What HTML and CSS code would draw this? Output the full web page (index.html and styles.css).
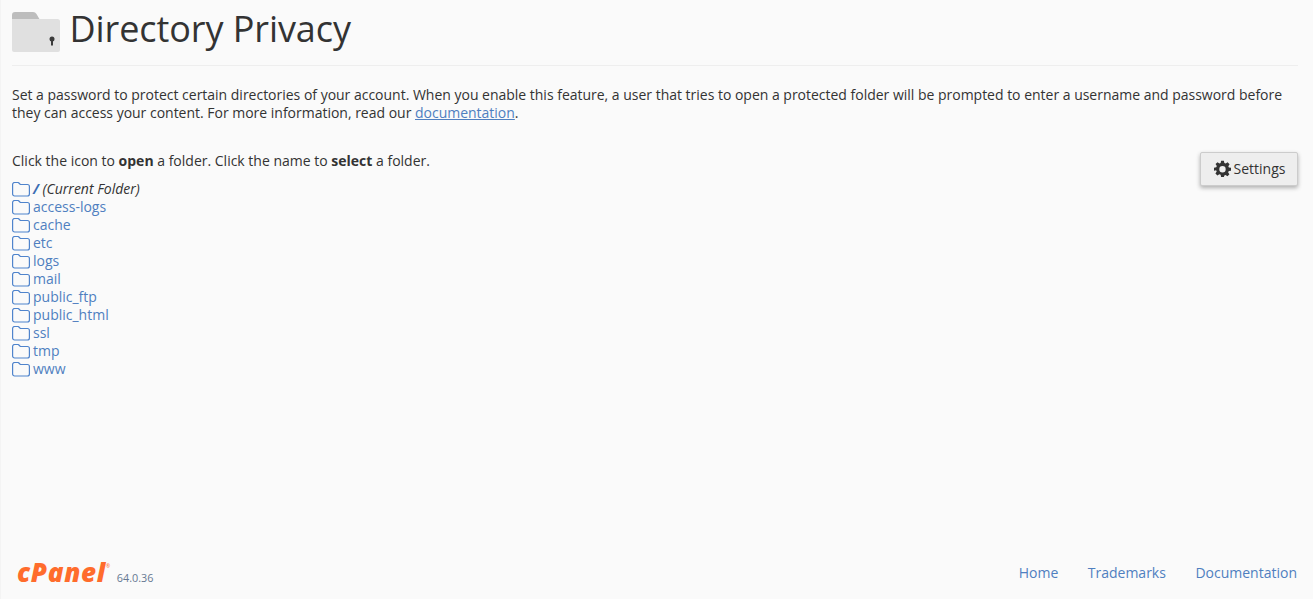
FILE: index.html
```html
<!DOCTYPE html>
<html lang="en">
<head>
<meta charset="utf-8">
<title>Directory Privacy</title>
<link rel="stylesheet" href="styles.css">
</head>
<body>
<div class="page">
  <main class="content">
    <header class="page-header">
      <svg class="page-icon" width="48" height="40" viewBox="0 0 48 40">
        <path fill="#bdbdbd" d="M0 3a3 3 0 0 1 3-3h18a4 4 0 0 1 3.500 2l3.500 6H0z"/>
        <path fill="#e0e0e0" d="M0 7h45.500a2.500 2.500 0 0 1 2.500 2.500V38a2 2 0 0 1-2 2H2a2 2 0 0 1-2-2z"/>
        <circle cx="40" cy="27" r="2.500" fill="#3a3a3a"/>
        <rect x="39" y="27" width="2" height="6.500" fill="#3a3a3a"/>
      </svg>
      <h1 class="page-title">Directory Privacy</h1>
    </header>
    <p class="intro">Set a password to protect certain directories of your account. When you enable this feature, a user that tries to open a protected folder will be prompted to enter a username and password before they can access your content. For more information, read our <a href="#" class="underlined">documentation</a>.</p>
    <div class="browser">
      <div class="tree">
        <p class="hint">Click the icon to <b>open</b> a folder. Click the name to <b>select</b> a folder.</p>
        <ul class="folders">
          <li class="folder"><svg class="folder-icon" viewBox="0 0 18 15"><path d="M.6 12V2.500a2 2 0 0 1 2-2h3.200a1.500 1.500 0 0 1 1.100.5l1.400 1.500h7.100a2 2 0 0 1 2 2V12a2 2 0 0 1-2 2h-12.800a2 2 0 0 1-2-2z"/></svg><span class="current"><b>/</b> (Current Folder)</span></li>
          <li class="folder"><svg class="folder-icon" viewBox="0 0 18 15"><path d="M.6 12V2.500a2 2 0 0 1 2-2h3.200a1.500 1.500 0 0 1 1.100.5l1.400 1.500h7.100a2 2 0 0 1 2 2V12a2 2 0 0 1-2 2h-12.800a2 2 0 0 1-2-2z"/></svg><a href="#">access-logs</a></li>
          <li class="folder"><svg class="folder-icon" viewBox="0 0 18 15"><path d="M.6 12V2.500a2 2 0 0 1 2-2h3.200a1.500 1.500 0 0 1 1.100.5l1.400 1.500h7.100a2 2 0 0 1 2 2V12a2 2 0 0 1-2 2h-12.800a2 2 0 0 1-2-2z"/></svg><a href="#">cache</a></li>
          <li class="folder"><svg class="folder-icon" viewBox="0 0 18 15"><path d="M.6 12V2.500a2 2 0 0 1 2-2h3.200a1.500 1.500 0 0 1 1.100.5l1.400 1.500h7.100a2 2 0 0 1 2 2V12a2 2 0 0 1-2 2h-12.800a2 2 0 0 1-2-2z"/></svg><a href="#">etc</a></li>
          <li class="folder"><svg class="folder-icon" viewBox="0 0 18 15"><path d="M.6 12V2.500a2 2 0 0 1 2-2h3.200a1.500 1.500 0 0 1 1.100.5l1.400 1.500h7.100a2 2 0 0 1 2 2V12a2 2 0 0 1-2 2h-12.800a2 2 0 0 1-2-2z"/></svg><a href="#">logs</a></li>
          <li class="folder"><svg class="folder-icon" viewBox="0 0 18 15"><path d="M.6 12V2.500a2 2 0 0 1 2-2h3.200a1.500 1.500 0 0 1 1.100.5l1.400 1.500h7.100a2 2 0 0 1 2 2V12a2 2 0 0 1-2 2h-12.800a2 2 0 0 1-2-2z"/></svg><a href="#">mail</a></li>
          <li class="folder"><svg class="folder-icon" viewBox="0 0 18 15"><path d="M.6 12V2.500a2 2 0 0 1 2-2h3.200a1.500 1.500 0 0 1 1.100.5l1.400 1.500h7.100a2 2 0 0 1 2 2V12a2 2 0 0 1-2 2h-12.800a2 2 0 0 1-2-2z"/></svg><a href="#">public_ftp</a></li>
          <li class="folder"><svg class="folder-icon" viewBox="0 0 18 15"><path d="M.6 12V2.500a2 2 0 0 1 2-2h3.200a1.500 1.500 0 0 1 1.100.5l1.400 1.500h7.100a2 2 0 0 1 2 2V12a2 2 0 0 1-2 2h-12.800a2 2 0 0 1-2-2z"/></svg><a href="#">public_html</a></li>
          <li class="folder"><svg class="folder-icon" viewBox="0 0 18 15"><path d="M.6 12V2.500a2 2 0 0 1 2-2h3.200a1.500 1.500 0 0 1 1.100.5l1.400 1.500h7.100a2 2 0 0 1 2 2V12a2 2 0 0 1-2 2h-12.800a2 2 0 0 1-2-2z"/></svg><a href="#">ssl</a></li>
          <li class="folder"><svg class="folder-icon" viewBox="0 0 18 15"><path d="M.6 12V2.500a2 2 0 0 1 2-2h3.200a1.500 1.500 0 0 1 1.100.5l1.400 1.500h7.100a2 2 0 0 1 2 2V12a2 2 0 0 1-2 2h-12.800a2 2 0 0 1-2-2z"/></svg><a href="#">tmp</a></li>
          <li class="folder"><svg class="folder-icon" viewBox="0 0 18 15"><path d="M.6 12V2.500a2 2 0 0 1 2-2h3.200a1.500 1.500 0 0 1 1.100.5l1.400 1.500h7.100a2 2 0 0 1 2 2V12a2 2 0 0 1-2 2h-12.800a2 2 0 0 1-2-2z"/></svg><a href="#">www</a></li>
        </ul>
      </div>
      <button class="settings" type="button">
        <svg class="gear" viewBox="0 0 24 24" width="17" height="17"><path fill="#333" fill-rule="evenodd" d="M10 1h4l.6 3.200 1.900.8 2.700-1.800 2.800 2.800-1.800 2.700.8 1.900L24 11v4l-3.200.6-.8 1.900 1.800 2.700-2.800 2.800-2.700-1.800-1.700.7L14 24h-4l-.6-3.100-1.900-.8-2.700 1.800-2.800-2.800 1.800-2.700-.8-1.800L0 15v-4l3.200-.6.800-1.900L2.200 5.800 5 3l2.700 1.800 1.700-.7zM12 8.500a4.500 4.500 0 1 0 0 9 4.500 4.500 0 0 0 0-9z"/></svg>
        <span class="settings-label">Settings</span>
      </button>
    </div>
  </main>
  <footer class="footer">
    <div class="brand">
      <span class="logo">cPanel<sup class="reg">®</sup></span>
      <span class="version">64.0.36</span>
    </div>
    <nav class="footer-links">
      <a href="#">Home</a>
      <a href="#">Trademarks</a>
      <a href="#">Documentation</a>
    </nav>
  </footer>
</div>
</body>
</html>
```
FILE: styles.css
```css
* { box-sizing: border-box; }
html, body { height: 100%; }
body {
  margin: 0;
  background: #fafafa;
  color: #333;
  font: 14px/18px "Open Sans", sans-serif;
}
a { color: #4f7fc0; text-decoration: none; }
.page {
  height: 599px;
  display: flex;
  flex-direction: column;
  justify-content: space-between;
  padding: 0 15px 0 11px;
  border-left: 1px solid #f4f4f4;
  overflow: hidden;
}
.page-header {
  height: 66px;
  display: flex;
  align-items: flex-start;
  gap: 9.500px;
  border-bottom: 1px solid #eee;
  padding-top: 12px;
}
.page-icon { display: block; flex: none; }
.page-title {
  margin: -3px 0 0;
  font-size: 36px;
  line-height: 40px;
  font-weight: 400;
  letter-spacing: -.08px;
  color: #333;
}
.intro { margin: 20px 0 0; letter-spacing: -.012px; }
.underlined { text-decoration: underline; }
.browser {
  margin-top: 30px;
  display: flex;
  justify-content: space-between;
  align-items: flex-start;
}
.hint { margin: 0 0 10px; }
.folders { list-style: none; margin: 0; padding: 0; }
.folder {
  height: 18px;
  line-height: 18px;
  display: flex;
  align-items: center;
  gap: 3px;
}
.folder-icon {
  width: 18px;
  height: 15px;
  flex: none;
  fill: none;
  stroke: #4f84cc;
  stroke-width: 1.200;
}
.current { font-style: italic; }
.current b { color: #3a6db3; }
.settings {
  width: 98px;
  height: 34px;
  display: flex;
  align-items: center;
  justify-content: center;
  gap: 3px;
  padding: 0;
  background: #eee;
  border: 1px solid #ccc;
  border-radius: 2px;
  box-shadow: 0 2px 4px rgba(0, 0, 0, .3);
  color: #333;
  font: 14px/18px "Open Sans", sans-serif;
}
.gear { display: block; margin: -2px 0 0 1px; }
.settings-label { margin-top: -1px; }
.footer {
  height: 52px;
  display: flex;
  justify-content: space-between;
  align-items: center;
  padding: 0 1px 0 5px;
}
.brand { display: flex; align-items: baseline; gap: 6px; }
.logo {
  color: #ff6c2c;
  font: italic 800 26px/26px "Open Sans", sans-serif;
  letter-spacing: .7px;
}
.reg { font-size: 5px; font-style: normal; font-weight: 400; line-height: 0; vertical-align: 14px; }
.version { color: #667892; font-size: 10.800px; }
.footer-links { display: flex; gap: 29.500px; }
```
